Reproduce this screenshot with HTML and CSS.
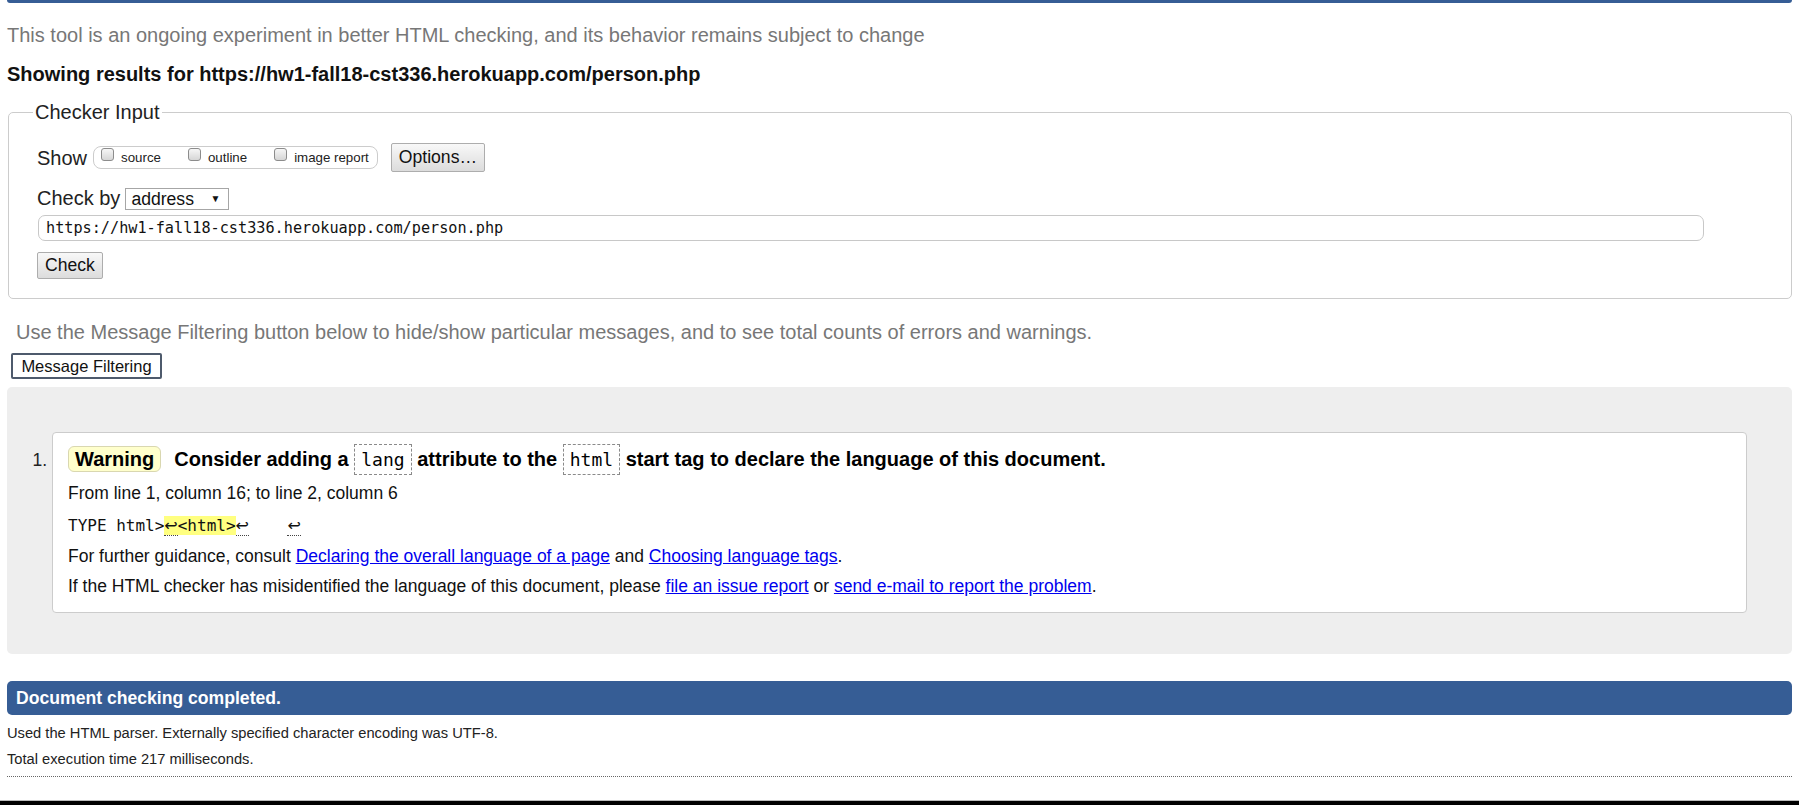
FILE: index.html
```html
<!DOCTYPE html>
<html lang="en">
<head>
<meta charset="utf-8">
<title>Nu Html Checker</title>
<link rel="stylesheet" href="styles.css">
</head>
<body>
<div class="page">
  <div class="topbar"></div>
  <p class="intro">This tool is an ongoing experiment in better HTML checking, and its behavior remains subject to change</p>
  <h2 class="results">Showing results for https://hw1-fall18-cst336.herokuapp.com/person.php</h2>

  <fieldset class="checker">
    <legend>Checker Input</legend>
    <div class="row show-row">
      <span class="row-label">Show</span>
      <span class="show-group">
        <label class="opt"><span class="box"></span>source</label>
        <label class="opt"><span class="box"></span>outline</label>
        <label class="opt"><span class="box"></span>image report</label>
      </span>
      <button class="btn options" type="button">Options…</button>
    </div>
    <div class="row by-row">
      <span class="row-label">Check by</span>
      <span class="select"><span class="select-value">address</span><span class="caret">▼</span></span>
    </div>
    <input class="url" type="text" value="https://hw1-fall18-cst336.herokuapp.com/person.php">
    <button class="btn check" type="button">Check</button>
  </fieldset>

  <p class="filter-note">Use the Message Filtering button below to hide/show particular messages, and to see total counts of errors and warnings.</p>
  <button class="filter-btn" type="button">Message Filtering</button>

  <ol class="messages">
    <li class="msg">
      <p class="msg-head"><strong class="badge">Warning</strong><span>Consider adding a <code class="tag">lang</code> attribute to the <code class="tag">html</code> start tag to declare the language of this document.</span></p>
      <p class="msg-line">From line 1, column 16; to line 2, column 6</p>
      <p class="msg-line extract"><code>TYPE html&gt;<mark><span class="lf">↩</span>&lt;html&gt;</mark><span class="lf">↩</span>    <span class="lf">↩</span></code></p>
      <p class="msg-line">For further guidance, consult <a href="#">Declaring the overall language of a page</a> and <a href="#">Choosing language tags</a>.</p>
      <p class="msg-line">If the HTML checker has misidentified the language of this document, please <a href="#">file an issue report</a> or <a href="#">send e-mail to report the problem</a>.</p>
    </li>
  </ol>

  <p class="done">Document checking completed.</p>
  <p class="stat first">Used the HTML parser. Externally specified character encoding was UTF-8.</p>
  <p class="stat">Total execution time 217 milliseconds.</p>
  <div class="rule"></div>
</div>
<div class="footer-bar"></div>
</body>
</html>
```

FILE: styles.css
```css
html {
  overflow: hidden;
}

body {
  margin: 0;
  font-family: "Liberation Sans", Arial, sans-serif;
  color: #222;
  background: #fff;
}

.page {
  padding: 0 7px;
}

.topbar {
  height: 3px;
  background: #365d95;
  border-radius: 0 0 5px 5px;
}

.intro {
  margin: 20px 0 0;
  font-size: 20px;
  line-height: 24px;
  color: #777;
}

.results {
  margin: 15px 0 0;
  font-size: 20px;
  line-height: 24px;
  font-weight: bold;
  color: #111;
}

/* Checker input fieldset */
.checker {
  margin: 14px 0 0 1px;
  padding: 0 0 19px 24px;
  border: 1px solid #ccc;
  border-radius: 5px;
  min-width: 0;
}

.checker legend {
  padding: 0 2px;
  font-size: 20px;
  line-height: 24px;
  color: #222;
}

.row {
  display: flex;
  padding-left: 4px;
}

.show-row {
  margin-top: 19px;
  height: 29px;
  align-items: center;
}

.row-label {
  font-size: 20px;
  line-height: 24px;
}

.show-group {
  display: flex;
  align-items: stretch;
  gap: 27px;
  height: 23px;
  box-sizing: border-box;
  margin-left: 6px;
  padding: 0 8px 0 7px;
  border: 1px solid #ccc;
  border-radius: 8px;
}

.opt {
  display: flex;
  align-items: flex-start;
  font-size: 13.3px;
  line-height: 21px;
  color: #222;
}

.box {
  width: 13px;
  height: 13px;
  box-sizing: border-box;
  margin: 1px 7px 0 0;
  border: 1px solid #8c8c8c;
  border-radius: 3px;
  background: linear-gradient(#f6f6f6, #d6d6d6);
}

.btn {
  font-family: "Liberation Sans", Arial, sans-serif;
  font-size: 17.6px;
  color: #111;
  border: 1px solid #adadad;
  border-radius: 2px;
  background: linear-gradient(#f8f8f8, #dcdcdc);
  padding: 0 7px;
}

.options {
  height: 29px;
  margin-left: 13px;
}

.by-row {
  margin-top: 14px;
  align-items: baseline;
}

.select {
  display: inline-flex;
  align-items: center;
  width: 104px;
  height: 22px;
  box-sizing: border-box;
  margin-left: 5px;
  padding-left: 5px;
  border: 1px solid #a6a6a6;
  font-size: 17.6px;
  line-height: 20px;
  color: #111;
  background: #fff;
}

.caret {
  margin-left: auto;
  margin-right: 8px;
  font-size: 10px;
  line-height: 20px;
}

.url {
  display: block;
  width: 1666px;
  height: 26px;
  box-sizing: border-box;
  margin: 5px 0 0 5px;
  padding: 0 7px;
  border: 1px solid #c8c8c8;
  border-radius: 7px;
  font-family: "DejaVu Sans Mono", monospace;
  font-size: 15.2px;
  color: #111;
  background: #fff;
  outline: none;
}

.check {
  display: block;
  height: 27px;
  margin: 11px 0 0 4px;
}

/* Filtering */
.filter-note {
  margin: 21px 0 0 9px;
  font-size: 20px;
  line-height: 24px;
  color: #777;
}

.filter-btn {
  display: block;
  width: 151px;
  height: 26px;
  margin: 9px 0 0 4px;
  padding: 0;
  font-family: "Liberation Sans", Arial, sans-serif;
  font-size: 16.5px;
  color: #111;
  background: #fff;
  border: 2px solid #4e5a6c;
  border-radius: 2px;
}

/* Messages */
.messages {
  margin: 8px 0 0;
  padding: 45px 45px 41px;
  background: #eee;
  border-radius: 5px;
  list-style: decimal;
}

.msg {
  padding: 11px 15px;
  border: 1px solid #ccc;
  border-radius: 4px;
  background: #fff;
  font-size: 17.5px;
  color: #111;
}

.msg::marker {
  color: #222;
}

.msg-head {
  margin: 0 0 3px;
  font-size: 20px;
  line-height: 31px;
  font-weight: bold;
  color: #000;
}

.badge {
  display: inline-block;
  margin-right: 13px;
  padding: 0 6px;
  line-height: 24px;
  border: 1px solid #d9d7b0;
  border-radius: 6px;
  background: #ffffcc;
}

.tag {
  display: inline-block;
  padding: 4px 6px;
  line-height: 21px;
  border: 1px dashed #8a8a8a;
  font-family: "DejaVu Sans Mono", monospace;
  font-size: 18px;
  font-weight: normal;
}

.msg-line {
  margin: 0;
  line-height: 30px;
  color: #111;
}

.extract {
  margin-top: 2px;
}

.extract code {
  font-family: "DejaVu Sans Mono", monospace;
  font-size: 16px;
  white-space: pre;
}

.extract mark {
  background: #ffff80;
  color: inherit;
}

.lf {
  font-family: "DejaVu Sans", sans-serif;
  border-bottom: 1px dotted #444;
}

.msg-line a {
  color: #0000ee;
}

/* Footer section */
.done {
  margin: 27px 0 0;
  height: 34px;
  padding-left: 9px;
  line-height: 34px;
  font-size: 17.6px;
  font-weight: bold;
  color: #fff;
  background: #365d95;
  border-radius: 5px;
}

.stat {
  margin: 0;
  font-size: 14.7px;
  line-height: 26px;
  color: #222;
}

.stat.first {
  margin-top: 5px;
}

.rule {
  margin-top: 4px;
  border-top: 1px dotted #666;
}

.footer-bar {
  margin-top: 23px;
  height: 5px;
  border-top: 1px solid #bbb;
  background: #000;
}
```
